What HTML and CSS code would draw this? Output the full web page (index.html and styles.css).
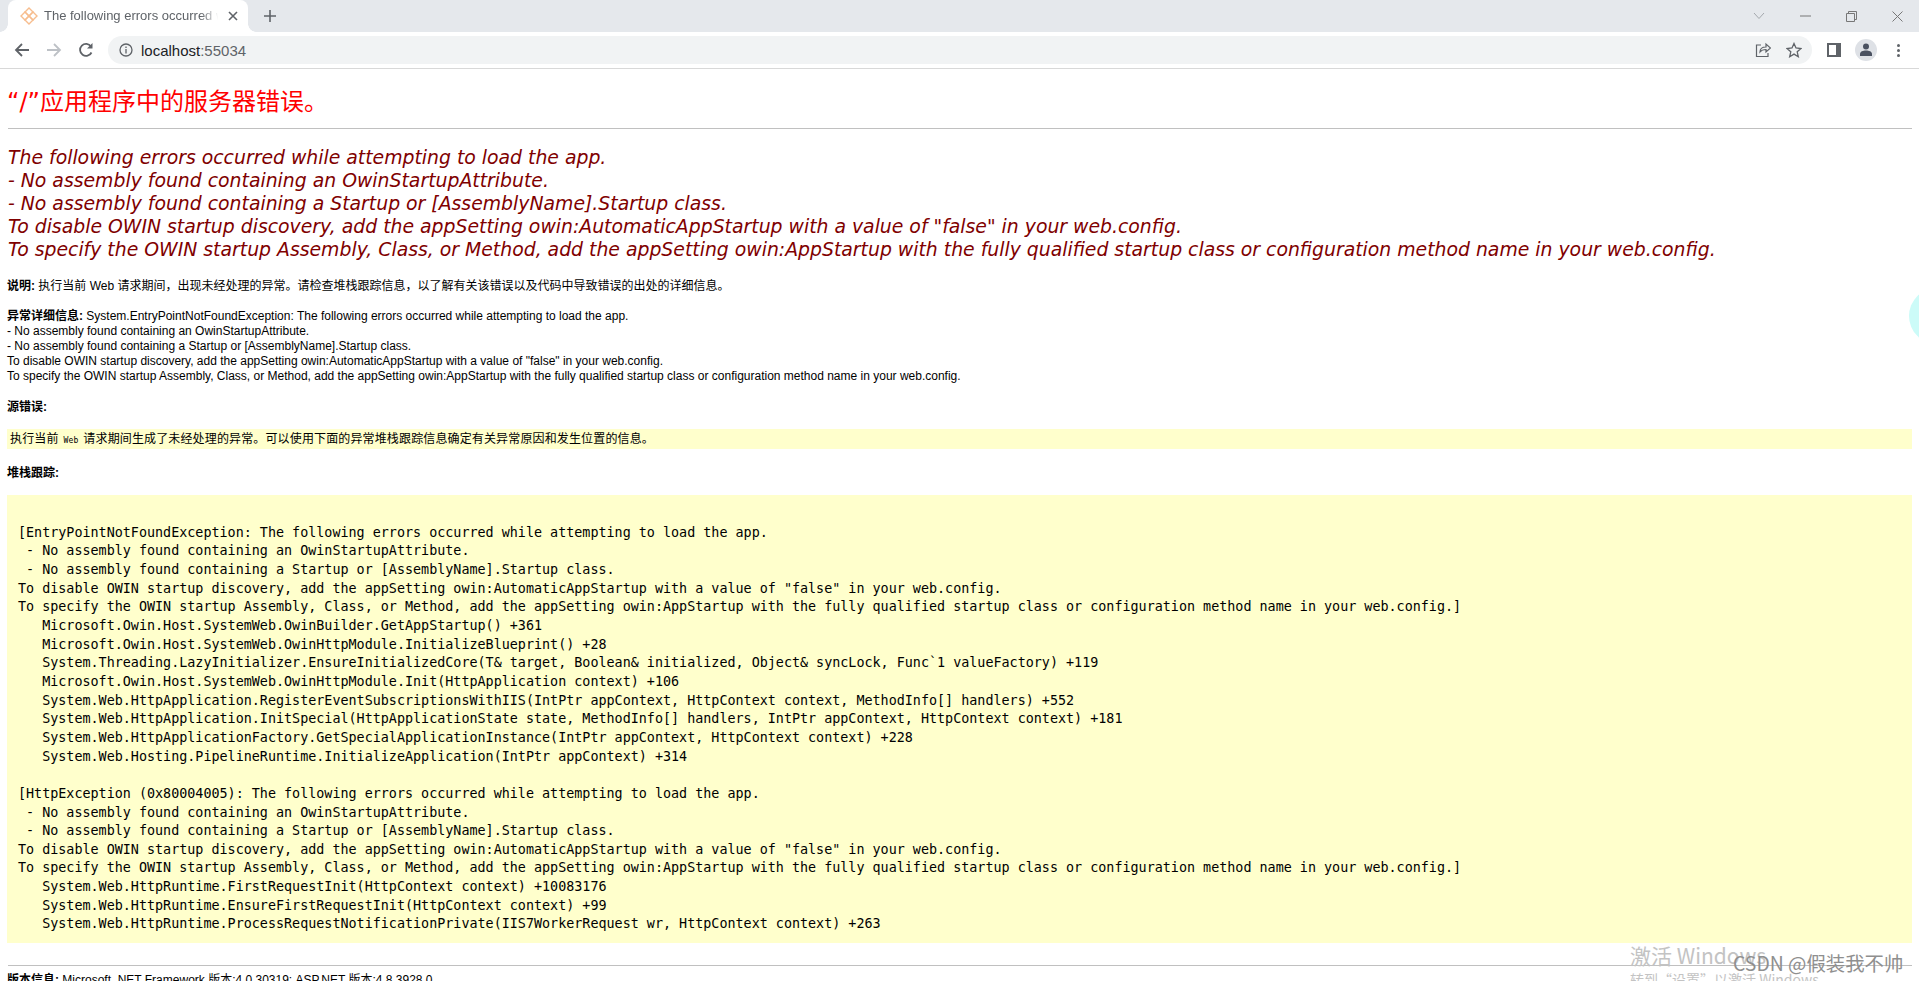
FILE: index.html
```html
<!DOCTYPE html>
<html lang="zh-CN">
<head>
    <meta charset="UTF-8">
    <title>The following errors occurred while attempting to load the app.</title>
    <link rel="stylesheet" href="styles.css">
</head>
<body>
    <div class="browser-top">
        <div class="tab-strip">
            <div class="tab">
                <svg class="favicon" width="18" height="18" viewBox="0 0 18 18" fill="none" stroke="#f7bd8e" stroke-width="1.4">
                    <path d="M9 1 13 5 9 9 5 5Z"/><path d="M9 9 13 13 9 17 5 13Z"/><path d="M5 5 9 9 5 13 1 9Z"/><path d="M13 5 17 9 13 13 9 9Z"/>
                </svg>
                <span class="tab-title">The following errors occurred while</span>
                <svg class="tab-close" width="10" height="10" viewBox="0 0 10 10" stroke="#5f6368" stroke-width="1.6"><path d="M1 1 9 9M9 1 1 9"/></svg>
            </div>
            <svg class="new-tab" width="14" height="14" viewBox="0 0 14 14" stroke="#5f6368" stroke-width="1.6"><path d="M7 1V13M1 7H13"/></svg>
            <div class="win-controls">
                <svg width="12" height="8" viewBox="0 0 12 8" fill="none" stroke="#a4a8ad"><path d="M1 1 6 6.500 11 1"/></svg>
                <svg class="win-min" width="11" height="2" viewBox="0 0 11 2" stroke="#777"><path d="M0 1H11"/></svg>
                <svg class="win-max" width="11" height="11" viewBox="0 0 11 11" fill="none" stroke="#777"><path d="M.5 2.500H8.500V10.500H.5ZM2.500 2.500V.5H10.500V8.500H8.500"/></svg>
                <svg class="win-close" width="11" height="11" viewBox="0 0 11 11" stroke="#777"><path d="M.5 .5 10.500 10.500M10.500 .5 .5 10.500"/></svg>
            </div>
        </div>
        <div class="toolbar">
            <svg class="tool-icon" width="16" height="16" viewBox="0 0 16 16" fill="none" stroke="#5f6368" stroke-width="1.8"><path d="M15 8H2M8 2 2 8 8 14"/></svg>
            <svg class="tool-icon" width="16" height="16" viewBox="0 0 16 16" fill="none" stroke="#bdc1c6" stroke-width="1.8"><path d="M1 8H14M8 2 14 8 8 14"/></svg>
            <svg class="tool-icon" width="16" height="16" viewBox="0 0 16 16" fill="none" stroke="#5f6368" stroke-width="1.8"><path d="M13.500 10.500A6 6 0 1 1 13 4.500"/><path d="M14.500 1V6.500H9" fill="#5f6368" stroke="none"/></svg>
            <div class="address-bar">
                <svg width="14" height="14" viewBox="0 0 14 14" fill="none" stroke="#5f6368" stroke-width="1.3"><circle cx="7" cy="7" r="6"/><path d="M7 6V10.500M7 3.500V5"/></svg>
                <span class="url">localhost<span class="url-port">:55034</span></span>
                <svg class="addr-share" width="16" height="16" viewBox="0 0 16 16" fill="none" stroke="#5f6368" stroke-width="1.2"><path d="M6 3H1.500V14.500H13V11M5 10C5 6.500 8 5 11 5V2L15.500 6 11 10V7.500C8.500 7.500 6.500 8 5 10Z"/></svg>
                <svg class="addr-star" width="16" height="16" viewBox="0 0 16 16" fill="none" stroke="#5f6368" stroke-width="1.3"><path d="M8 1.500 10 6 15 6.500 11.200 9.800 12.300 14.700 8 12.100 3.700 14.700 4.800 9.800 1 6.500 6 6Z"/></svg>
            </div>
            <svg class="side-panel" width="14" height="14" viewBox="0 0 14 14"><rect width="14" height="14" fill="#5f6368"/><rect x="2" y="2" width="7" height="10" fill="#fff"/></svg>
            <div class="avatar">
                <svg width="14" height="14" viewBox="0 0 14 14" fill="#4a5160"><circle cx="7" cy="3.500" r="3"/><path d="M1 13V11C1 8.500 4 7.500 7 7.500S13 8.500 13 11V13Z"/></svg>
            </div>
            <div class="kebab"><i></i><i></i><i></i></div>
        </div>
    </div>

    <div class="page">
        <h1>“/”应用程序中的服务器错误。</h1>
        <hr>
        <h2>The following errors occurred while attempting to load the app.<br>
- No assembly found containing an OwinStartupAttribute.<br>
- No assembly found containing a Startup or [AssemblyName].Startup class.<br>
To disable OWIN startup discovery, add the appSetting owin:AutomaticAppStartup with a value of "false" in your web.config.<br>
To specify the OWIN startup Assembly, Class, or Method, add the appSetting owin:AppStartup with the fully qualified startup class or configuration method name in your web.config.</h2>

        <p class="info first-info"><b>说明:</b> 执行当前 Web 请求期间，出现未经处理的异常。请检查堆栈跟踪信息，以了解有关该错误以及代码中导致错误的出处的详细信息。</p>

        <p class="info"><b>异常详细信息:</b> System.EntryPointNotFoundException: The following errors occurred while attempting to load the app.<br>
- No assembly found containing an OwinStartupAttribute.<br>
- No assembly found containing a Startup or [AssemblyName].Startup class.<br>
To disable OWIN startup discovery, add the appSetting owin:AutomaticAppStartup with a value of "false" in your web.config.<br>
To specify the OWIN startup Assembly, Class, or Method, add the appSetting owin:AppStartup with the fully qualified startup class or configuration method name in your web.config.</p>

        <p class="info source-label"><b>源错误:</b></p>

        <div class="code-bar">执行当前<span class="code-latin"> Web </span>请求期间生成了未经处理的异常。可以使用下面的异常堆栈跟踪信息确定有关异常原因和发生位置的信息。</div>

        <p class="info stack-label"><b>堆栈跟踪:</b></p>

        <pre class="stack">

[EntryPointNotFoundException: The following errors occurred while attempting to load the app.
 - No assembly found containing an OwinStartupAttribute.
 - No assembly found containing a Startup or [AssemblyName].Startup class.
To disable OWIN startup discovery, add the appSetting owin:AutomaticAppStartup with a value of "false" in your web.config.
To specify the OWIN startup Assembly, Class, or Method, add the appSetting owin:AppStartup with the fully qualified startup class or configuration method name in your web.config.]
   Microsoft.Owin.Host.SystemWeb.OwinBuilder.GetAppStartup() +361
   Microsoft.Owin.Host.SystemWeb.OwinHttpModule.InitializeBlueprint() +28
   System.Threading.LazyInitializer.EnsureInitializedCore(T&amp; target, Boolean&amp; initialized, Object&amp; syncLock, Func`1 valueFactory) +119
   Microsoft.Owin.Host.SystemWeb.OwinHttpModule.Init(HttpApplication context) +106
   System.Web.HttpApplication.RegisterEventSubscriptionsWithIIS(IntPtr appContext, HttpContext context, MethodInfo[] handlers) +552
   System.Web.HttpApplication.InitSpecial(HttpApplicationState state, MethodInfo[] handlers, IntPtr appContext, HttpContext context) +181
   System.Web.HttpApplicationFactory.GetSpecialApplicationInstance(IntPtr appContext, HttpContext context) +228
   System.Web.Hosting.PipelineRuntime.InitializeApplication(IntPtr appContext) +314

[HttpException (0x80004005): The following errors occurred while attempting to load the app.
 - No assembly found containing an OwinStartupAttribute.
 - No assembly found containing a Startup or [AssemblyName].Startup class.
To disable OWIN startup discovery, add the appSetting owin:AutomaticAppStartup with a value of "false" in your web.config.
To specify the OWIN startup Assembly, Class, or Method, add the appSetting owin:AppStartup with the fully qualified startup class or configuration method name in your web.config.]
   System.Web.HttpRuntime.FirstRequestInit(HttpContext context) +10083176
   System.Web.HttpRuntime.EnsureFirstRequestInit(HttpContext context) +99
   System.Web.HttpRuntime.ProcessRequestNotificationPrivate(IIS7WorkerRequest wr, HttpContext context) +263
</pre>
        <hr class="foot-rule">
        <p class="info version"><b>版本信息:</b> Microsoft .NET Framework 版本:4.0.30319; ASP.NET 版本:4.8.3928.0</p>
    </div>

    <!-- overlays on top of the screenshot -->
    <div class="side-blob"></div>
    <div class="activate">
        <div class="activate-title">激活 Windows</div>
        <div class="activate-sub">转到“设置”以激活 Windows。</div>
    </div>
    <div class="csdn-mark">CSDN @假装我不帅</div>
</body>
</html>
```

FILE: styles.css
```css
* {
    box-sizing: border-box;
}

html, body {
    margin: 0;
    height: 981px;
    overflow: hidden;
    background: white;
}

body {
    position: relative;
    font-family: "Liberation Sans", "Noto Sans CJK SC", sans-serif;
}

/* Browser chrome */
.browser-top {
    height: 69px;
    border-bottom: 1px solid #d8d8d8;
}

.tab-strip {
    height: 32px;
    background: #e5e8ec;
    display: flex;
    align-items: center;
    padding-left: 8px;
}

.tab {
    position: relative;
    width: 240px;
    height: 32px;
    background: white;
    border-radius: 8px 8px 0 0;
    display: flex;
    align-items: center;
    padding: 0 11px 0 12px;
}

.tab::before, .tab::after {
    content: "";
    position: absolute;
    bottom: 0;
    width: 8px;
    height: 8px;
}

.tab::before {
    left: -8px;
    background: radial-gradient(circle at 0 0, #e5e8ec 7.5px, white 8px);
}

.tab::after {
    right: -8px;
    background: radial-gradient(circle at 100% 0, #e5e8ec 7.5px, white 8px);
}

.favicon {
    flex: none;
}

.tab-title {
    margin-left: 6px;
    width: 178px;
    flex: none;
    font-size: 13px;
    line-height: 14px;
    padding-bottom: 1px;
    color: #5f6368;
    white-space: nowrap;
    overflow: hidden;
    -webkit-mask-image: linear-gradient(to right, black 88%, transparent 98%);
    mask-image: linear-gradient(to right, black 88%, transparent 98%);
}

.tab-close {
    flex: none;
    margin-left: 6px;
}

.new-tab {
    margin-left: 15px;
}

.win-controls {
    margin-left: auto;
    display: flex;
    align-items: center;
    padding-right: 16px;
}

.win-min, .win-max, .win-close {
    margin-left: 35px;
}

.toolbar {
    height: 36px;
    display: flex;
    align-items: center;
    padding-left: 14px;
}

.tool-icon {
    margin-right: 16px;
    flex: none;
}

.tool-icon:nth-child(3) {
    margin-right: 14px;
}

.address-bar {
    width: 1704px;
    height: 28px;
    background: #f1f3f4;
    border-radius: 14px;
    display: flex;
    align-items: center;
    padding: 0 10px 0 11px;
    flex: none;
}

.url {
    margin-left: 8px;
    font-size: 15px;
    color: #202124;
}

.url-port {
    color: #5f6368;
}

.addr-share {
    margin-left: auto;
}

.addr-star {
    margin-left: 15px;
}

.side-panel {
    margin-left: 15px;
    flex: none;
}

.avatar {
    margin-left: 14px;
    width: 22px;
    height: 22px;
    border-radius: 50%;
    background: #dee1e6;
    display: flex;
    align-items: center;
    justify-content: center;
    flex: none;
}

.kebab {
    margin-left: 20px;
    display: flex;
    flex-direction: column;
    gap: 2px;
}

.kebab i {
    display: block;
    width: 3px;
    height: 3px;
    border-radius: 50%;
    background: #5f6368;
}

/* Page content */
.page {
    padding: 0 8px;
    color: black;
}

h1 {
    margin: 18px 0 0 -1px;
    font-family: "DejaVu Sans", "Noto Sans CJK SC", sans-serif;
    font-size: 24px;
    font-weight: normal;
    line-height: 30px;
    color: red;
}

hr {
    margin: 11px -1px 0 0;
    height: 1px;
    border: none;
    background: #c0c0c0;
}

h2 {
    margin: 17px 0 0;
    font-family: "DejaVu Sans", sans-serif;
    font-size: 18.83px;
    font-style: italic;
    font-weight: normal;
    line-height: 23px;
    color: maroon;
}

.info {
    margin: 15px 0 0 -1px;
    font-size: 12px;
    line-height: 15px;
}

.first-info {
    margin-top: 18px;
}

.source-label {
    margin-top: 16px;
}

.code-bar {
    margin: 14px -1px 0;
    height: 20px;
    padding-left: 3px;
    background: #ffffcc;
    font-family: "DejaVu Sans Mono", "Noto Sans CJK SC", monospace;
    font-size: 12px;
    letter-spacing: .14px;
    line-height: 20px;
}

.code-latin {
    font-size: 8px;
    white-space: pre;
}

.stack-label {
    margin-top: 17px;
}

.stack {
    margin: 14px -1px 0;
    height: 448px;
    padding: 10px 11px 0;
    background: #ffffcc;
    font-family: "DejaVu Sans Mono", monospace;
    font-size: 13.4px;
    line-height: 18.66px;
    overflow: hidden;
}

.foot-rule {
    margin-top: 22px;
}

.version {
    margin-top: 7px;
}

/* Overlays */
.side-blob {
    position: absolute;
    right: -46px;
    top: 288px;
    width: 56px;
    height: 56px;
    border-radius: 50%;
    background: #ccfbf8;
}

.activate {
    position: absolute;
    left: 1630px;
    top: 941px;
    color: #c3c3c3;
}

.activate-title {
    font-family: "Noto Sans CJK SC", sans-serif;
    font-size: 21px;
    line-height: 28px;
}

.activate-sub {
    font-family: "Noto Sans CJK SC", sans-serif;
    font-size: 14px;
    line-height: 20px;
}

.csdn-mark {
    position: absolute;
    left: 1733px;
    top: 950px;
    font-family: "Noto Sans CJK SC", sans-serif;
    font-size: 19.4px;
    line-height: 26px;
    color: #8f8f8f;
}
```
